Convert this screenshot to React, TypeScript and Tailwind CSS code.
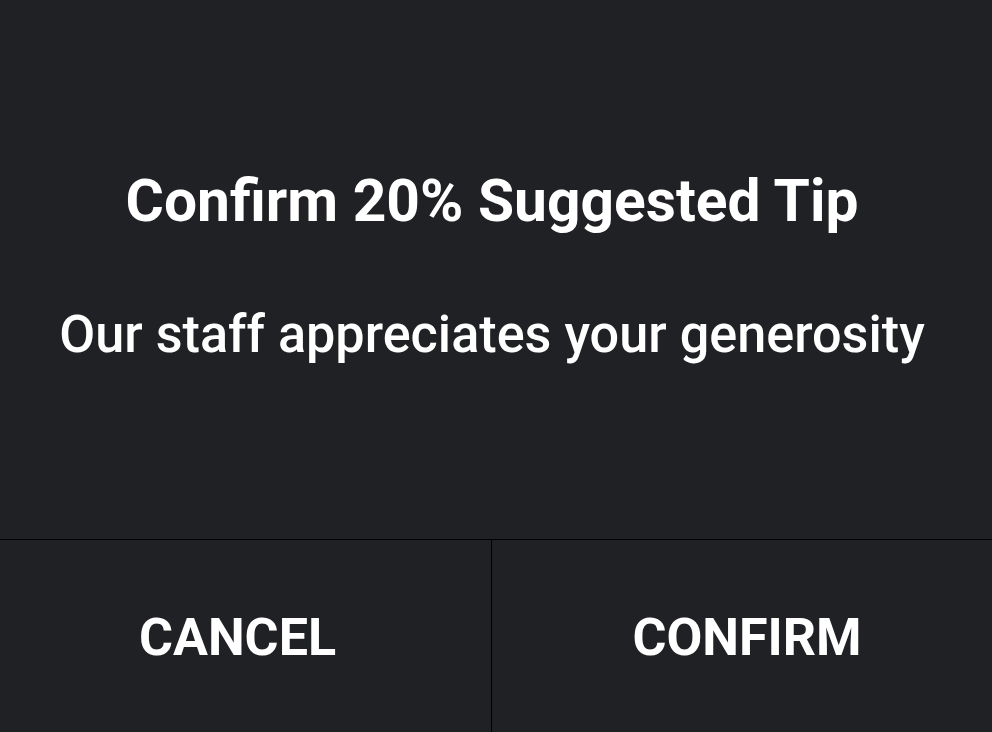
export default function App() {
	return (
		<div
			className="flex h-[732px] w-[992px] flex-col bg-[#202124] text-white"
			style={{ fontFamily: "Roboto, 'Noto Sans', sans-serif" }}
		>
			{/* Prompt */}
			<div className="flex h-[540px] flex-col items-center justify-center gap-[78px] border-b border-black pr-2 pb-[6px] text-center">
				<h1 className="text-[58.7px] font-bold leading-none">Confirm 20% Suggested Tip</h1>
				<p className="text-[52.2px] font-medium leading-none">Our staff appreciates your generosity</p>
			</div>

			{/* Actions */}
			<div className="flex flex-1">
				<button className="flex w-[492px] items-center justify-center border-r border-black pr-4 pt-1 text-[52px] font-bold">
					CANCEL
				</button>
				<button className="flex flex-1 items-center justify-center pl-[10px] pt-1 text-[52px] font-bold">
					CONFIRM
				</button>
			</div>
		</div>
	)
}
